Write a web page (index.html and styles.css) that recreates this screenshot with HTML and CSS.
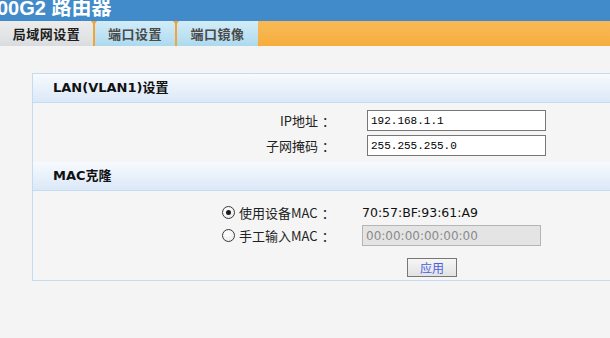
FILE: index.html
```html
<!DOCTYPE html>
<html lang="zh-CN">
<head>
<meta charset="utf-8">
<title>局域网设置</title>
<link rel="stylesheet" href="styles.css">
</head>
<body>
<header class="topbar">
  <div class="title">00G2 路由器</div>
</header>
<nav class="tabs">
  <a class="tab active">局域网设置</a>
  <a class="tab">端口设置</a>
  <a class="tab">端口镜像</a>
</nav>
<main class="content">
  <section class="panel">
    <h2 class="panel-head">LAN(VLAN1)设置</h2>
    <div class="lan-body">
      <label class="lan-label">IP地址<span class="colon">：</span></label>
      <input class="text-input" type="text" value="192.168.1.1">
      <label class="lan-label">子网掩码<span class="colon">：</span></label>
      <input class="text-input" type="text" value="255.255.255.0">
    </div>
    <h2 class="panel-head">MAC克隆</h2>
    <div class="mac-body">
      <div class="mac-row">
        <span class="radio checked"></span>
        <span class="mac-label">使用设备MAC<span class="colon">：</span></span>
        <span class="mac-value">70:57:BF:93:61:A9</span>
      </div>
      <div class="mac-row">
        <span class="radio"></span>
        <span class="mac-label">手工输入MAC<span class="colon">：</span></span>
        <input class="mac-input" type="text" value="00:00:00:00:00:00" disabled>
      </div>
      <div class="btn-row">
        <button class="btn" type="button">应用</button>
      </div>
    </div>
  </section>
</main>
</body>
</html>
```

FILE: styles.css
```css
html, body {
  margin: 0;
  padding: 0;
}
body {
  background: #f4f4f4;
  overflow: hidden;
  width: 610px;
  height: 338px;
  font-family: "Noto Sans CJK SC", "Liberation Sans", sans-serif;
}
.topbar {
  height: 21px;
  background: #418bca;
  overflow: hidden;
}
.title {
  color: #fff;
  font-family: "Liberation Sans", "Noto Sans CJK SC", sans-serif;
  font-weight: bold;
  font-size: 20px;
  line-height: 20px;
  height: 20px;
  margin-top: -2px;
  margin-left: -3px;
  white-space: nowrap;
}
.tabs {
  display: flex;
  height: 25px;
  background: linear-gradient(#f8b955, #f7b34a 60%, #f6ad38);
}
.tab {
  display: flex;
  align-items: center;
  justify-content: center;
  width: 80px;
  font-size: 13px;
  font-weight: bold;
  color: #4a4a4a;
  background: linear-gradient(#d2ecf8, #b9e0f2 70%, #acd9ee);
  border-left: 2px solid #f2a534;
  position: relative;
  letter-spacing: 0.5px;
}
.tab::before {
  content: "";
  position: absolute;
  top: 0;
  left: -4px;
  border-left: 3px solid transparent;
  border-right: 3px solid transparent;
  border-top: 4px solid #f2a534;
}
.tab.active {
  width: 93px;
  border-left: none;
  color: #1e1e1e;
  background: linear-gradient(#ececec, #e0e2e4 70%, #d9dcdf);
}
.tab.active::before {
  display: none;
}
.tab:last-child {
  width: 81px;
}
.content {
  padding: 27px 0 0 32px;
}
.panel {
  width: 620px;
  border: 1px solid #c4dbf2;
  background: #f5f5f5;
}
.panel-head {
  margin: 0;
  height: 28px;
  line-height: 28px;
  padding-left: 20px;
  font-family: "DejaVu Sans", "Noto Sans CJK SC", sans-serif;
  font-size: 13px;
  font-weight: bold;
  color: #111;
  background: linear-gradient(#f7fafe, #e9f1fb 50%, #dbe8f8);
  border-bottom: 1px solid #c4dbf2;
}
.lan-body {
  display: grid;
  grid-template-columns: 302px 179px;
  column-gap: 32px;
  row-gap: 4px;
  padding: 7px 0 6px;
  align-items: center;
}
.lan-label {
  text-align: right;
  font-family: "Noto Sans CJK SC", sans-serif;
  font-size: 13px;
  color: #222;
  line-height: 21px;
}
.colon {
  padding-left: 4px;
}
.text-input {
  box-sizing: border-box;
  width: 179px;
  height: 21px;
  border: 1px solid #777;
  background: #fff;
  padding: 0 3px;
  margin: 0;
  font-family: "Liberation Mono", monospace;
  font-size: 11px;
  color: #000;
  outline: none;
}
.mac-body {
  padding: 11px 0 2px;
}
.mac-row {
  display: flex;
  align-items: center;
  padding-left: 189px;
  height: 20px;
}
.mac-row + .mac-row {
  margin-top: 3px;
  height: 21px;
}
.radio {
  box-sizing: border-box;
  width: 13px;
  height: 13px;
  border: 1px solid #3a3a3a;
  border-radius: 50%;
  background: radial-gradient(circle at 40% 35%, #ffffff, #e8e8e8);
  display: flex;
  align-items: center;
  justify-content: center;
  margin-right: 4px;
}
.radio.checked::after {
  content: "";
  width: 5px;
  height: 5px;
  border-radius: 50%;
  background: #1a1a1a;
}
.mac-label {
  width: 123px;
  font-family: "Noto Sans CJK SC", sans-serif;
  font-size: 13px;
  color: #222;
}
.mac-value {
  font-family: "DejaVu Sans", sans-serif;
  font-size: 12.5px;
  color: #111;
}
.mac-input {
  box-sizing: border-box;
  width: 179px;
  height: 21px;
  margin: 0;
  padding: 0 3px;
  border: 1px solid #b5b5b5;
  background: #e4e4e4;
  font-family: "DejaVu Sans", sans-serif;
  font-size: 12px;
  color: #8a8a8a;
}
.btn-row {
  margin-top: 8px;
  padding-left: 374px;
}
.btn {
  box-sizing: border-box;
  width: 50px;
  height: 19px;
  padding: 0;
  margin: 0;
  border: 1px solid #777;
  background: linear-gradient(#f6f6f6, #e2e2e2);
  font-family: "Noto Sans CJK SC", sans-serif;
  font-size: 12px;
  line-height: 17px;
  color: #4a5fe6;
}
```
